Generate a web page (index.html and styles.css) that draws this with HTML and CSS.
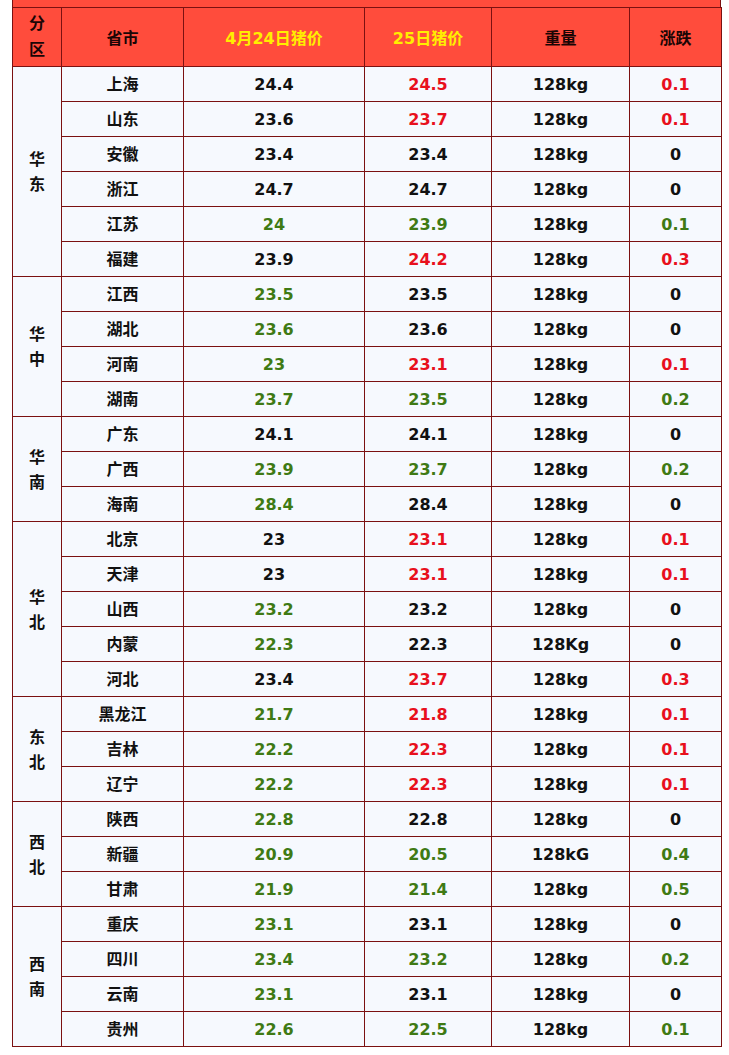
FILE: index.html
```html
<!DOCTYPE html>
<html lang="zh">
<head>
<meta charset="utf-8">
<title>猪价</title>
<link rel="stylesheet" href="styles.css">
</head>
<body>
<div class="wrap">
  <div class="topbar"></div>
  <table class="price">
    <colgroup>
      <col class="c1"><col class="c2"><col class="c3"><col class="c4"><col class="c5"><col class="c6">
    </colgroup>
    <thead>
      <tr>
        <th class="area-h">分<br>区</th>
        <th>省市</th>
        <th class="y">4月24日猪价</th>
        <th class="y">25日猪价</th>
        <th>重量</th>
        <th>涨跌</th>
      </tr>
    </thead>
    <tbody>
      <tr><td class="area" rowspan="6">华<br>东</td><td>上海</td><td>24.4</td><td class="r">24.5</td><td>128kg</td><td class="r">0.1</td></tr>
      <tr><td>山东</td><td>23.6</td><td class="r">23.7</td><td>128kg</td><td class="r">0.1</td></tr>
      <tr><td>安徽</td><td>23.4</td><td>23.4</td><td>128kg</td><td>0</td></tr>
      <tr><td>浙江</td><td>24.7</td><td>24.7</td><td>128kg</td><td>0</td></tr>
      <tr><td>江苏</td><td class="g">24</td><td class="g">23.9</td><td>128kg</td><td class="g">0.1</td></tr>
      <tr><td>福建</td><td>23.9</td><td class="r">24.2</td><td>128kg</td><td class="r">0.3</td></tr>

      <tr><td class="area" rowspan="4">华<br>中</td><td>江西</td><td class="g">23.5</td><td>23.5</td><td>128kg</td><td>0</td></tr>
      <tr><td>湖北</td><td class="g">23.6</td><td>23.6</td><td>128kg</td><td>0</td></tr>
      <tr><td>河南</td><td class="g">23</td><td class="r">23.1</td><td>128kg</td><td class="r">0.1</td></tr>
      <tr><td>湖南</td><td class="g">23.7</td><td class="g">23.5</td><td>128kg</td><td class="g">0.2</td></tr>

      <tr><td class="area" rowspan="3">华<br>南</td><td>广东</td><td>24.1</td><td>24.1</td><td>128kg</td><td>0</td></tr>
      <tr><td>广西</td><td class="g">23.9</td><td class="g">23.7</td><td>128kg</td><td class="g">0.2</td></tr>
      <tr><td>海南</td><td class="g">28.4</td><td>28.4</td><td>128kg</td><td>0</td></tr>

      <tr><td class="area" rowspan="5">华<br>北</td><td>北京</td><td>23</td><td class="r">23.1</td><td>128kg</td><td class="r">0.1</td></tr>
      <tr><td>天津</td><td>23</td><td class="r">23.1</td><td>128kg</td><td class="r">0.1</td></tr>
      <tr><td>山西</td><td class="g">23.2</td><td>23.2</td><td>128kg</td><td>0</td></tr>
      <tr><td>内蒙</td><td class="g">22.3</td><td>22.3</td><td>128Kg</td><td>0</td></tr>
      <tr><td>河北</td><td>23.4</td><td class="r">23.7</td><td>128kg</td><td class="r">0.3</td></tr>

      <tr><td class="area" rowspan="3">东<br>北</td><td>黑龙江</td><td class="g">21.7</td><td class="r">21.8</td><td>128kg</td><td class="r">0.1</td></tr>
      <tr><td>吉林</td><td class="g">22.2</td><td class="r">22.3</td><td>128kg</td><td class="r">0.1</td></tr>
      <tr><td>辽宁</td><td class="g">22.2</td><td class="r">22.3</td><td>128kg</td><td class="r">0.1</td></tr>

      <tr><td class="area" rowspan="3">西<br>北</td><td>陕西</td><td class="g">22.8</td><td>22.8</td><td>128kg</td><td>0</td></tr>
      <tr><td>新疆</td><td class="g">20.9</td><td class="g">20.5</td><td>128kG</td><td class="g">0.4</td></tr>
      <tr><td>甘肃</td><td class="g">21.9</td><td class="g">21.4</td><td>128kg</td><td class="g">0.5</td></tr>

      <tr><td class="area" rowspan="4">西<br>南</td><td>重庆</td><td class="g">23.1</td><td>23.1</td><td>128kg</td><td>0</td></tr>
      <tr><td>四川</td><td class="g">23.4</td><td class="g">23.2</td><td>128kg</td><td class="g">0.2</td></tr>
      <tr><td>云南</td><td class="g">23.1</td><td>23.1</td><td>128kg</td><td>0</td></tr>
      <tr><td>贵州</td><td class="g">22.6</td><td class="g">22.5</td><td>128kg</td><td class="g">0.1</td></tr>
    </tbody>
  </table>
</div>
</body>
</html>
```

FILE: styles.css
```css
html, body {
  margin: 0;
  padding: 0;
  background: #ffffff;
}

.wrap {
  margin-left: 12px;
  width: 709px;
}

.topbar {
  height: 7px;
  background: #ff4c3c;
  border-left: 1px solid #7b1111;
  border-right: 1px solid #7b1111;
  box-sizing: border-box;
}

.price {
  width: 709px;
  border-collapse: collapse;
  table-layout: fixed;
  font-family: "DejaVu Sans", "Noto Sans CJK SC", sans-serif;
  font-weight: 700;
  font-size: 16px;
  color: #111111;
}

.c1 { width: 49px; }
.c2 { width: 122px; }
.c3 { width: 181px; }
.c4 { width: 127px; }
.c5 { width: 138px; }
.c6 { width: 92px; }

.price th,
.price td {
  border: 1px solid #7b1111;
  padding: 0;
  text-align: center;
  vertical-align: middle;
}

.price th {
  height: 58px;
  background: #ff4c3c;
  color: #1a0505;
  font-weight: 700;
}

.price th.y {
  color: #ffee00;
}

.price th.area-h {
  line-height: 26px;
}

.price td {
  height: 33px;
  padding-top: 1px;
  background: #f6f9fe;
  line-height: 20px;
}

.price td.area {
  line-height: 25px;
}

.price .r { color: #e8101c; }
.price .g { color: #3f7a14; }
```
